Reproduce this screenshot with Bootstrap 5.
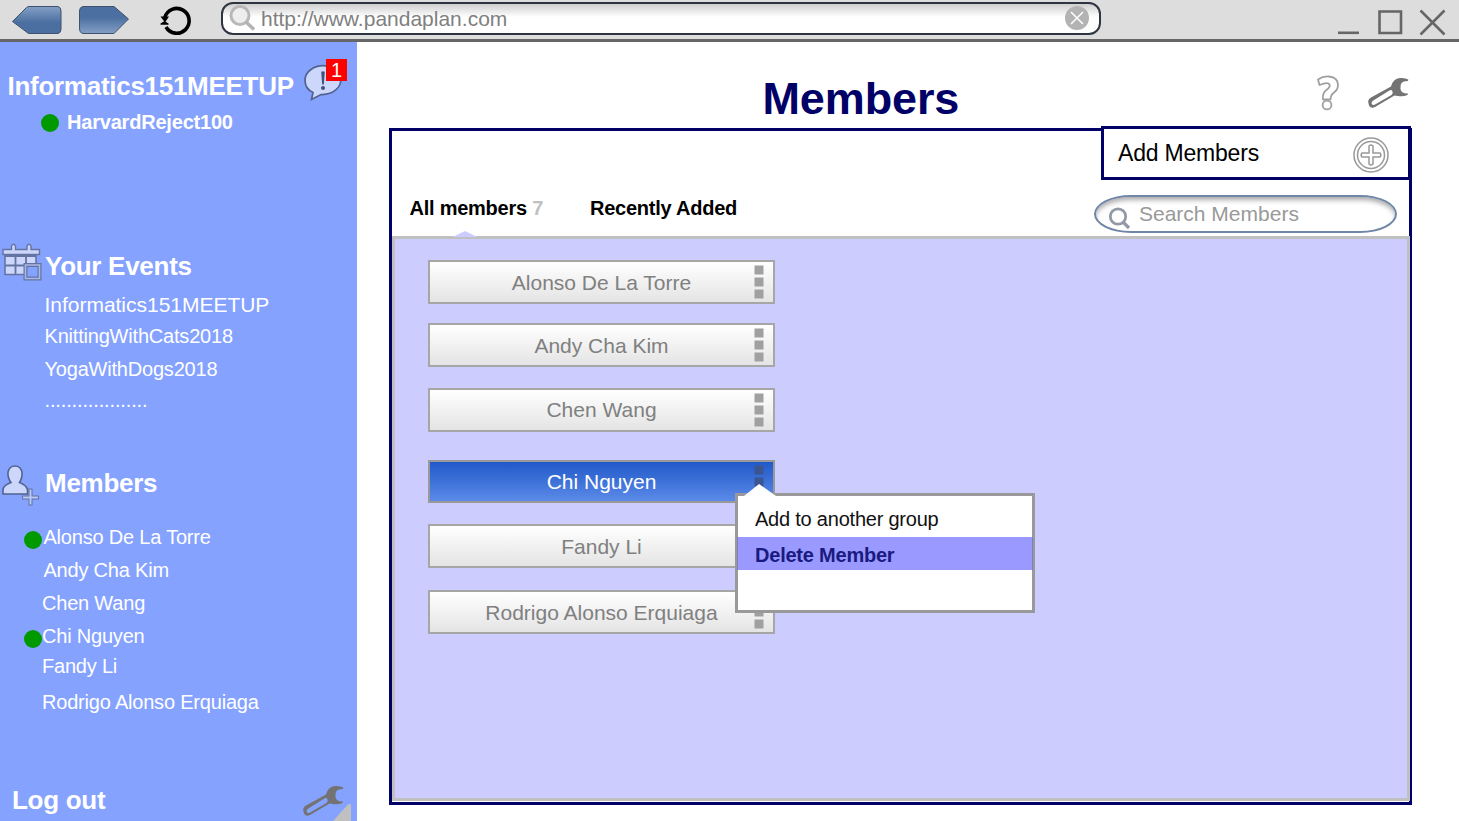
<!DOCTYPE html>
<html lang="en">
<head>
<meta charset="utf-8">
<meta name="viewport" content="width=device-width, initial-scale=1">
<title>PandaPlan - Members</title>
<link href="https://cdn.jsdelivr.net/npm/bootstrap@5.3.0/dist/css/bootstrap.min.css" rel="stylesheet">
<style>
body{font-family:"Liberation Sans",Arial,sans-serif;font-size:20px;line-height:24px;letter-spacing:-.2px;height:821px;overflow:hidden;background:#fff;color:#000}
svg{overflow:visible;flex:none;display:block}
.browser-bar{height:42px;background:#ddd;border-bottom:3px solid #666}
.nav-icons{width:221px;height:39px}
.url-box{width:880px;height:33px;margin-top:2px;border:2px solid #2f3540;border-radius:12px;background:linear-gradient(#cfcfcf,#fff 45%);color:#808080;font-size:21px;line-height:30px;letter-spacing:0}
.url-text{margin-left:3px;flex:1}
.side-panel{width:357px;background:#85a2ff;color:#fff}
.side-head{font-size:26px;line-height:30px;font-weight:700;letter-spacing:-.28px;margin:0;height:30px}
.side-list{padding:0;margin:0;list-style:none}
.side-list li{height:24px;white-space:nowrap;position:relative}
.g6{margin-top:6px}.g7{margin-top:7px}.g9{margin-top:9px}.g12{margin-top:12px}
.online-dot{width:18px;height:18px;border-radius:50%;background:#090;flex:none}
.people .online-dot{position:absolute;left:-18px;top:6px}
.notice{position:absolute;left:326px;top:16.500px;width:21px;height:22.500px;background:#f00;font-size:20px;line-height:23px;text-align:center}
.page-title{font-size:45px;line-height:52px;font-weight:700;color:#006;margin:31px 0 5px 405.500px;letter-spacing:-.12px;height:50px}
.tools{width:96px;height:50px;margin:31px 47px 0 auto}
.member-panel{width:1023px;height:677px;margin-left:32px;border:3px solid #006}
.add-box{width:310px;height:54px;margin:-5px -2px 0 auto;border:3px solid #006;font-size:23px;padding-left:14px;line-height:48px;background:#fff;letter-spacing:-.2px}
.tab-row{height:56px}
.tab-link{font-weight:700;position:relative;margin-top:16px;height:24px;letter-spacing:-.24px}
.tab-link .count{color:#c0c0c0}
.tab-notch{position:absolute;left:43px;top:35px;width:25px;height:6px;background:#ccf;clip-path:polygon(50% 0,100% 100%,0 100%)}
.search-box{width:303px;height:38px;margin:15px 12px 0 auto;border:2px solid #7086a6;border-radius:37px/19px;background:#fff;box-shadow:inset 0 4px 5px -1px #aaa;color:#999;font-size:21px;letter-spacing:0}
.member-pane{height:565px;width:1018px;border:3px solid #c0c0c0;background:#ccf;padding:21px 0 0 33px}
.member-btn{width:347px;height:44px;border:2px solid #a6a6a6;background:linear-gradient(#fff,#e4e4e4);color:#808080;font-size:21px;letter-spacing:0;position:relative}
.member-btn.low{padding-top:2px}
.member-btn.selected{height:43px;background:linear-gradient(#2159c9,#5b8ae8);color:#fff;border-color:#999}
.kebab{position:absolute;right:9px;top:3px;color:#a0a0a0}
.selected .kebab{color:#3a5590}
.popup{position:absolute;left:305px;top:31px;width:300px;height:120px;background:#fff;border:3px solid #999;color:#111;font-size:20px;letter-spacing:-.22px;z-index:2;padding-top:11px}
.popup-item{height:30px;line-height:24px;padding-left:17px}
.popup-item.chosen{height:33px;line-height:37px;margin:0 -1px;padding-left:18px;background:#9999ff;color:#1a1a80;font-weight:700;box-shadow:inset 1px 0 #7f7fc0,inset -1px 0 #7f7fc0}
.popup-tip{position:absolute;left:6px;top:-12px;width:32px;height:12px;background:#fff;clip-path:polygon(47% 0,100% 100%,0 100%)}
</style>
</head>
<body class="d-flex flex-column">
<header class="browser-bar d-flex flex-shrink-0">
  <svg class="nav-icons" viewBox="0 0 221 39">
    <defs>
      <linearGradient id="ga" x2="0" y2="1"><stop stop-color="#849fc6"/><stop offset=".6" stop-color="#4a6fa0"/><stop offset="1" stop-color="#4a6fa0"/></linearGradient>
      <linearGradient id="gb" x2="0" y2="1"><stop stop-color="#4a6fa0"/><stop offset=".4" stop-color="#4a6fa0"/><stop offset="1" stop-color="#849fc6"/></linearGradient>
    </defs>
    <path d="M12.500 21.500 26.500 7.500Q27.500 6.500 29 6.500H58Q61 7 61 11V29Q61 33 58 33.500H28.500Z" fill="url(#ga)" stroke="#40516b"/>
    <path d="M128.500 19 114 6.500H83Q79.500 7 79.500 11V28Q79.500 33 83 33.500H114Z" fill="url(#gb)" stroke="#40516b"/>
    <path d="M164.800 17.500A12.400 12.400 0 1 1 166 27" fill="none" stroke="#000" stroke-width="3.600"/>
    <path d="M160.500 16.500H169L165 22.500ZM160.500 24.800V23.500L164.500 21 168.500 23.500V24.800Z" fill="#000"/>
  </svg>
  <div class="url-box d-flex align-items-center">
    <svg width="35" height="29" viewBox="223 4 35 29"><circle cx="240" cy="15.500" r="9" fill="#eee" stroke="#b8b8b8" stroke-width="3"/><path d="m246 22 8 7.500" stroke="#b3b3b3" stroke-width="3.600"/></svg>
    <span class="url-text">http://www.pandaplan.com</span>
    <svg width="35" height="29" viewBox="1064 4 35 29"><circle cx="1077" cy="18" r="12" fill="#b3b3b3"/><path d="m1071 12 12 12m0-12-12 12" stroke="#fff" stroke-width="1.500"/></svg>
  </div>
  <svg class="ms-auto" width="130" height="39" viewBox="1329 0 130 39"><path d="M1338 32.800h21" stroke="#666" stroke-width="2.600"/><path d="M1379.500 11.500h21.500v21.500h-21.500zM1420.500 10.500l24 24m0-24-24 24" fill="none" stroke="#666" stroke-width="2.600"/></svg>
</header>
<div class="d-flex flex-grow-1">
  <aside class="side-panel flex-shrink-0 position-relative">
    <h2 class="side-head" style="margin:29px 0 0 7.500px">Informatics151MEETUP</h2>
    <svg class="position-absolute" style="left:300px;top:13px" width="50" height="50" viewBox="300 55 50 50"><path d="M313 92.500C303 88 302.500 75 311 69.500 320 63 337 65 340.500 76 343 88 332 95 321 94.500L311.500 99.500Z" fill="#ccd7fb" stroke="#52638f" stroke-width="1.700"/><path d="M321.200 71.500h3.600l-1 13h-1.600z" fill="#40527c"/><circle cx="323" cy="88" r="2" fill="#40527c"/></svg>
    <div class="notice">1</div>
    <div class="d-flex align-items-center g9 fw-bold" style="padding-left:40.500px"><span class="online-dot position-relative" style="top:1px;margin-right:8.500px"></span><span>HarvardReject100</span></div>
    <div class="d-flex" style="margin-top:117px">
      <svg width="45" height="30" viewBox="0 251 45 30"><path d="M5 254h31v20.500H5z" fill="#ccd7fb" stroke="#6474a2" stroke-width="1.600"/><path d="M15.500 255v20M26 255v20M5 265.500h31M5 256h31" stroke="#6474a2" stroke-width="1.800"/><path d="M3 249.500h8.500v-3.500q2-3.500 4 0v3.500H27v-3.500q2-3.500 4 0v3.500h8.500v5H3z" fill="#ccd7fb" stroke="#6474a2" stroke-width="1.400"/><path d="M25.500 265h14v13.500h-14z" fill="#85a2ff" stroke="#6474a2" stroke-width="4"/><path d="M25.500 265h14v13.500h-14z" fill="none" stroke="#a9b8e6" stroke-width="1.600"/></svg>
      <h2 class="side-head">Your Events</h2>
    </div>
    <ul class="side-list g12" style="padding-left:44.500px">
      <li style="font-size:21px;letter-spacing:-.02px">Informatics151MEETUP</li>
      <li class="g7">KnittingWithCats2018</li>
      <li class="g9">YogaWithDogs2018</li>
      <li class="g7" style="letter-spacing:-.14px">...................</li>
    </ul>
    <div class="d-flex" style="margin-top:56px">
      <svg width="45" height="30" viewBox="0 468 45 30"><path d="M3 494V490Q3 485.500 11 482.500 7.500 478 8 472 9.500 466 15 466T22 472Q22.500 478 19.500 482.500 27 485.500 27.500 490V494Z" fill="#ccd7fb" stroke="#52638f" stroke-width="1.600"/><path d="M30.500 488.500v17M22 497.500h17" stroke="#62739f" stroke-width="4"/><path d="M30.500 489.500v15M23 497.500h15" stroke="#b8c8fa" stroke-width="2"/></svg>
      <h2 class="side-head">Members</h2>
    </div>
    <ul class="side-list people" style="margin:27px 0 0 42px">
      <li><span class="online-dot"></span>&#8202;Alonso De La Torre</li>
      <li class="g9">&#8202;Andy Cha Kim</li>
      <li class="g9">Chen Wang</li>
      <li class="g9"><span class="online-dot"></span>Chi Nguyen</li>
      <li class="g6">Fandy Li</li>
      <li class="g12">Rodrigo Alonso Erquiaga</li>
    </ul>
    <div class="d-flex" style="margin:71px 0 0 12px">
      <h2 class="side-head">Log out</h2>
      <svg class="ms-auto" width="57" height="36" viewBox="300 785 57 36"><path id="wrench" fill="#737373" fill-rule="evenodd" d="M303.500 808Q304 806.500 306 805.500L326 794.500Q328 786.500 335 786 340 785.500 343.300 787.500L343 789Q337 789 336 792 334.500 797 337 800 339 801.500 343 801.500L342.500 803Q338 805 333 804L329.500 803.500 310 815Q306 817 304 813.500 302.500 810 303.500 808ZM307.500 809Q305.800 811 307 812.500 308.500 813.500 310.500 812.300L326.500 803Q328.500 801 327 798.500 326 797.500 324 798.800Z"/><path d="M333 821 348 804.500 351 804V821Z" fill="#c0c0c0"/></svg>
    </div>
  </aside>
  <main class="flex-grow-1">
    <div class="d-flex">
      <h1 class="page-title">Members</h1>
      <svg class="tools" viewBox="1316 73 96 50"><path d="M1318 79.500Q1323 76 1329 76.500 1338 77.500 1338 85 1338 89.500 1334 92.500 1330.500 95 1330.500 99.500H1323Q1322 93 1327 89.500 1330.500 87 1329.500 84.500 1328 81.500 1319.500 85Z" fill="#fff" stroke="#a0a0a0" stroke-width="1.800" stroke-linejoin="round"/><circle cx="1327" cy="105" r="4.400" fill="#fff" stroke="#a0a0a0" stroke-width="1.800"/><use href="#wrench" x="1065" y="-708"/></svg>
    </div>
    <section class="member-panel">
      <div class="add-box d-flex align-items-center justify-content-between"><span>Add Members</span><svg width="60" height="48" viewBox="1348 129 60 48"><g fill="none" stroke="#999" stroke-width="1.500"><circle cx="1371" cy="155" r="17"/><circle cx="1371" cy="155" r="13.500"/><path d="M1369 146q2-2 4 0v6.900h7q1.800 2.100 0 4.200h-7v6.900q-2 2-4 0v-6.900h-7q-1.800-2.100 0-4.200h7z"/></g></svg></div>
      <div class="tab-row d-flex">
        <div class="tab-link" style="margin-left:17.500px;width:180.500px">All members <span class="count">7</span><span class="tab-notch"></span></div>
        <div class="tab-link">Recently Added</div>
        <div class="search-box d-flex align-items-center"><svg width="43" height="34" viewBox="1096 197 43 34"><circle cx="1118" cy="216.500" r="7.700" fill="none" stroke="#929aa6" stroke-width="2.800"/><path d="m1123 222 6 6" stroke="#929aa6" stroke-width="3.200"/></svg><span>Search Members</span></div>
      </div>
      <div class="member-pane">
        <div class="member-btn low d-flex align-items-center justify-content-center">Alonso De La Torre<svg class="kebab" width="10" height="34"><path d="M.5.500h9v9h-9zM.5 12.500h9v9h-9zM.5 24.500h9v9h-9z" fill="currentColor"/></svg></div>
        <div class="member-btn low d-flex align-items-center justify-content-center" style="margin-top:19px">Andy Cha Kim<svg class="kebab" width="10" height="34"><path d="M.5.500h9v9h-9zM.5 12.500h9v9h-9zM.5 24.500h9v9h-9z" fill="currentColor"/></svg></div>
        <div class="member-btn d-flex align-items-center justify-content-center" style="margin-top:21px">Chen Wang<svg class="kebab" width="10" height="34"><path d="M.5.500h9v9h-9zM.5 12.500h9v9h-9zM.5 24.500h9v9h-9z" fill="currentColor"/></svg></div>
        <div class="member-btn selected d-flex align-items-center justify-content-center" style="margin-top:28px">Chi Nguyen<svg class="kebab" width="10" height="34"><path d="M.5.500h9v9h-9zM.5 12.500h9v9h-9zM.5 24.500h9v9h-9z" fill="currentColor"/></svg>
          <div class="popup"><span class="popup-tip"></span><div class="popup-item">Add to another group</div><div class="popup-item chosen">Delete Member</div></div>
        </div>
        <div class="member-btn low d-flex align-items-center justify-content-center" style="margin-top:21px">Fandy Li<svg class="kebab" width="10" height="34"><path d="M.5.500h9v9h-9zM.5 12.500h9v9h-9zM.5 24.500h9v9h-9z" fill="currentColor"/></svg></div>
        <div class="member-btn low d-flex align-items-center justify-content-center" style="margin-top:22px">Rodrigo Alonso Erquiaga<svg class="kebab" width="10" height="34"><path d="M.5.500h9v9h-9zM.5 12.500h9v9h-9zM.5 24.500h9v9h-9z" fill="currentColor"/></svg></div>
      </div>
    </section>
  </main>
</div>
<script src="https://cdn.jsdelivr.net/npm/bootstrap@5.3.0/dist/js/bootstrap.bundle.min.js"></script>
</body>
</html>
